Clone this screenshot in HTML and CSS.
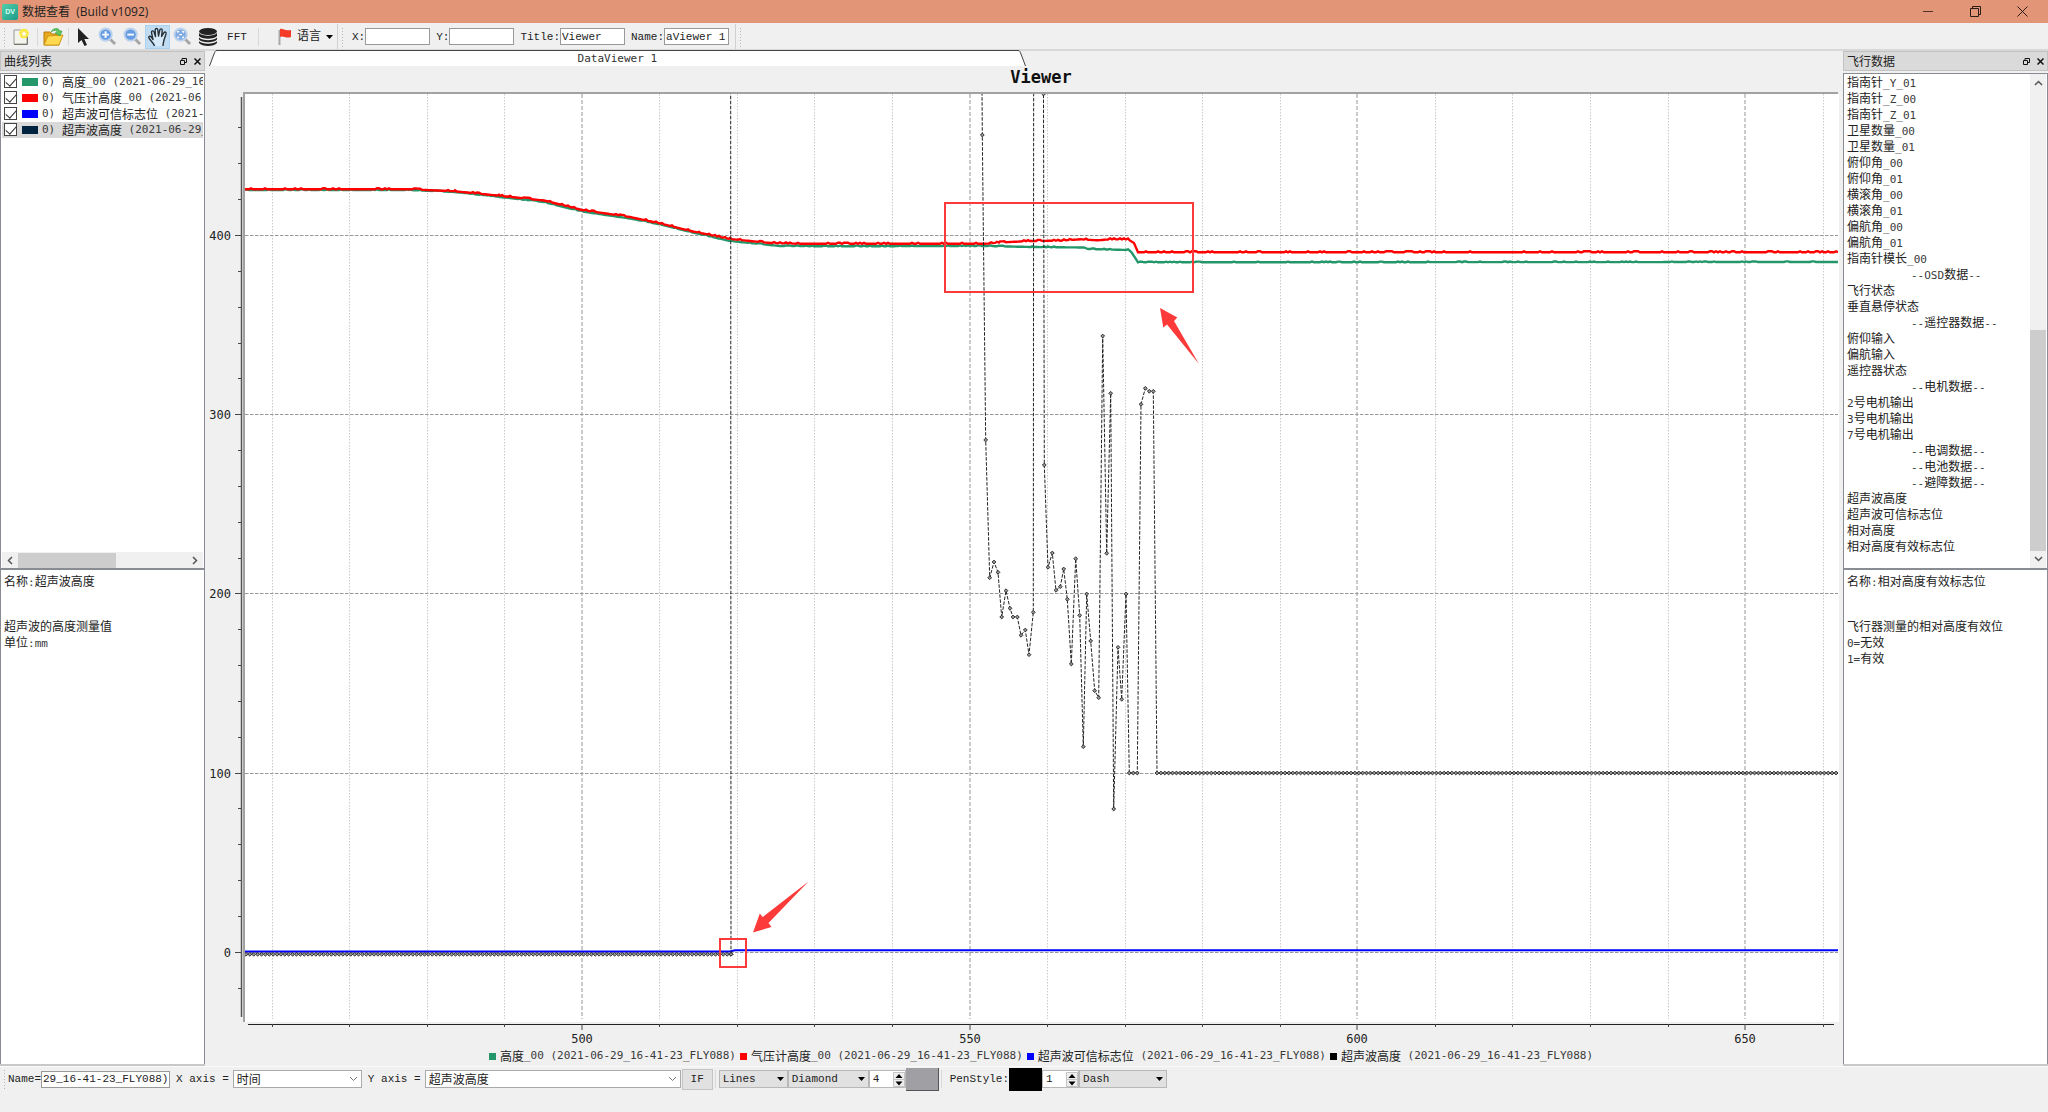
FILE: index.html
```html
<!DOCTYPE html>
<html lang="zh-CN">
<head>
<meta charset="utf-8">
<title>数据查看 (Build v1092)</title>
<link rel="stylesheet" href="styles.css">
</head>
<body>
<header class="titlebar">
  <svg class="app-icon" width="16" height="16" viewBox="0 0 16 16" aria-hidden="true">
    <defs><linearGradient id="app" x1="0" y1="0" x2="1" y2="1"><stop offset="0" stop-color="#4fd0a8"/><stop offset="1" stop-color="#1f9a8c"/></linearGradient></defs>
    <rect width="16" height="16" rx="2" fill="url(#app)"/>
    <text x="8" y="10" class="app-letters">DV</text>
  </svg>
  <h1>数据查看&nbsp; (Build v1092)</h1>
  <div class="window-buttons">
    <button aria-label="最小化"><svg width="11" height="11"><path d="M0 5.500H10" stroke="#4a3228" fill="none"/></svg></button>
    <button aria-label="还原"><svg width="11" height="11"><path d="M.5 2.500H8.500V10.500H.5ZM2.500 2.500V.5H10.500V8.500H8.500" stroke="#2a1c16" fill="none"/></svg></button>
    <button aria-label="关闭"><svg width="11" height="11"><path d="M.5 .5L10.500 10.500M10.500 .5L.5 10.500" stroke="#2a1c16" fill="none"/></svg></button>
  </div>
</header>

<nav class="toolbar top">
  <i class="grip"></i>
  <button class="tool" aria-label="新建"><svg width="18" height="18" viewBox="0 0 18 18"><path d="M2 2H15V16H2Z" fill="#f4f4ee" stroke="#9b9b92"/><path d="M2 16.500H15.500V7" fill="none" stroke="#77776e"/><circle cx="12" cy="5.500" r="4.800" fill="#fff04a"/><path d="M12 1.500L13.200 4.200L16 4.500L14 6.500L14.600 9.300L12 8L9.400 9.300L10 6.500L8 4.500L10.800 4.200Z" fill="#fffde0" stroke="#e8cf00" stroke-width=".6"/></svg></button>
  <i class="sep"></i>
  <button class="tool" aria-label="打开"><svg width="21" height="20" viewBox="0 0 21 20"><path d="M1 18V5H7L9 7H16V18Z" fill="#e9a91c" stroke="#b87d10"/><path d="M1 18L5 9L20 8L16 18Z" fill="#ffd94f" stroke="#d19a1c"/><path d="M8 5C10 1 15 0 17 4L19 4L17 9L12 6L14.500 5C13 3 11 3 8 5Z" fill="#5cc860" stroke="#35993d" stroke-width=".6"/></svg></button>
  <i class="sep narrow"></i>
  <button class="tool" aria-label="选择"><svg width="14" height="20" viewBox="0 0 14 20"><path d="M2 1V16L5.500 13L8.500 19L11 18L8.300 12H13Z" fill="#222"/></svg></button>
  <button class="tool glass" aria-label="放大"><svg width="19" height="19" viewBox="0 0 20 20"><path d="M12 12L18 18" stroke="#999" stroke-width="3"/><circle cx="8" cy="8" r="6.500" fill="#4f8fe0" stroke="#b5cdec" stroke-width="2"/><path d="M8 4.500V11.500M4.500 8H11.500" stroke="#fff" stroke-width="2"/></svg></button>
  <button class="tool glass" aria-label="缩小"><svg width="19" height="19" viewBox="0 0 20 20"><path d="M12 12L18 18" stroke="#999" stroke-width="3"/><circle cx="8" cy="8" r="6.500" fill="#4f8fe0" stroke="#b5cdec" stroke-width="2"/><path d="M4.500 8H11.500" stroke="#fff" stroke-width="2"/></svg></button>
  <button class="tool active" aria-label="平移"><svg width="22" height="22" viewBox="0 0 22 22"><path d="M7.500 20C7 17 2.500 14 1.800 11.500C1.600 9.800 3.800 9.800 5 12L6 13.500L4.500 6.500C4.300 4.600 6.300 4.300 7 6L8.500 10.500L8.200 4C8.300 2 10.500 2 10.800 4L11.500 10L12.800 4C13.300 2.200 15.400 2.600 15.200 4.600L14.600 10.500L16.800 6.800C17.800 5.200 19.600 6 19 8L17 14C16.500 16.500 16 17.500 16 20" fill="#d6e9f8" stroke="#26323a" stroke-width="1.400" stroke-linejoin="round"/></svg></button>
  <button class="tool glass" aria-label="全图"><svg width="19" height="19" viewBox="0 0 20 20"><path d="M12 12L18 18" stroke="#999" stroke-width="3"/><circle cx="8" cy="8" r="6.500" fill="#6fa0e0" stroke="#b5cdec" stroke-width="2"/><path d="M5 6V4.800H6.500M9.500 4.800H11V6M11 10V11.200H9.500M6.500 11.200H5V10M6.500 8H9.500" stroke="#fff" fill="none" stroke-width="1.300"/></svg></button>
  <button class="tool" aria-label="数据库"><svg width="20" height="20" viewBox="0 0 20 20" fill="#222"><ellipse cx="10" cy="4.500" rx="9" ry="3.500"/><path d="M1 6C4 9.500 16 9.500 19 6V9C16 12.500 4 12.500 1 9Z"/><path d="M1 10.500C4 14 16 14 19 10.500V12.500C16 16 4 16 1 12.500Z"/><path d="M1 14.200C4 17.500 16 17.500 19 14.200V16C16 20 4 20 1 16Z"/></svg></button>
  <button class="tool fft">FFT</button>
  <i class="sep"></i>
  <button class="lang"><svg width="14" height="17" viewBox="0 0 14 17"><path d="M1.500 2V17" stroke="#a8a8a8" stroke-width="2"/><path d="M2 1C5 0 6 3 13 2V9C8 11 5 7 2 9Z" fill="#f53a28"/></svg><span>语言</span><svg width="7" height="4"><path d="M0 0H7L3.500 4Z"/></svg></button>
  <i class="rule"></i><i class="grip"></i>
  <label class="field first">X:<input type="text"></label>
  <label class="field">Y:<input type="text"></label>
  <label class="field">Title:<input type="text" value="Viewer"></label>
  <label class="field">Name:<input type="text" value="aViewer 1"></label>
  <i class="rule"></i><i class="grip"></i>
</nav>

<main>
  <aside class="dock">
    <div class="dock-head"><h2>曲线列表</h2>
      <button aria-label="浮动"><svg width="7" height="7"><path d="M2 2V.5H6.500V4.500H5M.5 2.500H4.500V6.500H.5Z" fill="none" stroke="#111"/></svg></button>
      <button aria-label="关闭"><svg width="7" height="7"><path d="M.5 .5L6.500 6.500M6.500 .5L.5 6.500" stroke="#111" stroke-width="1.500"/></svg></button>
    </div>
    <section class="list curves">
      <ul>
        <li><label><input type="checkbox" checked><i class="swatch green"></i><span class="m">0) </span>高度<span class="m">_00 (2021-06-29_16-41-23_FLY088)</span></label></li>
        <li><label><input type="checkbox" checked><i class="swatch red"></i><span class="m">0) </span>气压计高度<span class="m">_00 (2021-06-29_16-41-23_FLY088)</span></label></li>
        <li><label><input type="checkbox" checked><i class="swatch blue"></i><span class="m">0) </span>超声波可信标志位<span class="m"> (2021-06-29_16-41-23_FLY088)</span></label></li>
        <li class="selected"><label><input type="checkbox" checked><i class="swatch navy"></i><span class="m">0) </span>超声波高度<span class="m"> (2021-06-29_16-41-23_FLY088)</span></label></li>
      </ul>
      <div class="hscroll"><svg width="6" height="9"><path d="M5 1L1.500 4.500L5 8" class="chev"/></svg><div class="track"><i class="thumb"></i></div><svg width="6" height="9"><path d="M1 1L4.500 4.500L1 8" class="chev"/></svg></div>
    </section>
    <section class="info"><p class="name">名称<span class="m">:</span>超声波高度</p><p>超声波的高度测量值<br>单位<span class="m">:mm</span></p></section>
  </aside>

  <section class="viewer">
    <div class="tabs">
      <svg width="8" height="16"><path d="M8 1L6 2L1 16H8Z" fill="#fff"/><path d="M8 .5C6 .5 6 2 5 4L.5 16" class="tab-edge"/></svg>
      <button class="tab">DataViewer 1</button>
      <svg width="8" height="16"><path d="M0 1L2 2L7 16H0Z" fill="#fff"/><path d="M0 .5C2 .5 2 2 3 4L7.500 16" class="tab-edge"/></svg>
    </div>
    <h2 class="chart-title">Viewer</h2>
    <svg class="chart" viewBox="205 90 1638 955" role="img" aria-label="Viewer">
      <defs>
        <clipPath id="plot"><rect x="245" y="94" width="1593" height="928"/></clipPath>
        <marker id="diamond" markerWidth="5" markerHeight="5" refX="2.500" refY="2.500" markerUnits="userSpaceOnUse"><path d="M2.500 .6L4.400 2.500L2.500 4.400L.6 2.500Z" fill="#999" stroke="#222" stroke-width=".9"/></marker>
      </defs>
      <rect x="245" y="94" width="1594" height="928" fill="#fff"/>
      <path d="M244 1022V93H1838" fill="none" stroke="#a2a2a2" stroke-width="2"/>
      <g id="grid"></g>
      <g id="axes"><path d="M241.500 97V1017" stroke="#555" stroke-width="1.500"/><path d="M248 1024.500H1834" stroke="#222"/></g>
      <g clip-path="url(#plot)" id="series"></g>
      <g class="marks">
        <rect x="945" y="203" width="248" height="89"/><rect x="720" y="939" width="26" height="28"/>
        <path d="M1160 308L1177.300 317.500L1174 321L1199 364L1167 324.500L1163.300 327.500Z"/>
        <path d="M753 932.500L759.800 913.500L762.700 917L808.500 881.500L768.500 923L771.500 927Z"/>
      </g>
    </svg>
    <ul class="legend">
      <li><i class="green"></i>高度<span class="m">_00 (2021-06-29_16-41-23_FLY088)</span></li>
      <li><i class="red"></i>气压计高度<span class="m">_00 (2021-06-29_16-41-23_FLY088)</span></li>
      <li><i class="blue"></i>超声波可信标志位<span class="m"> (2021-06-29_16-41-23_FLY088)</span></li>
      <li><i class="black"></i>超声波高度<span class="m"> (2021-06-29_16-41-23_FLY088)</span></li>
    </ul>
  </section>

  <aside class="dock">
    <div class="dock-head"><h2>飞行数据</h2>
      <button aria-label="浮动"><svg width="7" height="7"><path d="M2 2V.5H6.500V4.500H5M.5 2.500H4.500V6.500H.5Z" fill="none" stroke="#111"/></svg></button>
      <button aria-label="关闭"><svg width="7" height="7"><path d="M.5 .5L6.500 6.500M6.500 .5L.5 6.500" stroke="#111" stroke-width="1.500"/></svg></button>
    </div>
    <section class="list flight">
      <ul>
        <li>指南针<span class="m">_Y_01</span></li>
        <li>指南针<span class="m">_Z_00</span></li>
        <li>指南针<span class="m">_Z_01</span></li>
        <li>卫星数量<span class="m">_00</span></li>
        <li>卫星数量<span class="m">_01</span></li>
        <li>俯仰角<span class="m">_00</span></li>
        <li>俯仰角<span class="m">_01</span></li>
        <li>横滚角<span class="m">_00</span></li>
        <li>横滚角<span class="m">_01</span></li>
        <li>偏航角<span class="m">_00</span></li>
        <li>偏航角<span class="m">_01</span></li>
        <li>指南针模长<span class="m">_00</span></li>
        <li class="group"><span class="m">--OSD</span>数据<span class="m">--</span></li>
        <li>飞行状态</li>
        <li>垂直悬停状态</li>
        <li class="group"><span class="m">--</span>遥控器数据<span class="m">--</span></li>
        <li>俯仰输入</li>
        <li>偏航输入</li>
        <li>遥控器状态</li>
        <li class="group"><span class="m">--</span>电机数据<span class="m">--</span></li>
        <li><span class="m">2</span>号电机输出</li>
        <li><span class="m">3</span>号电机输出</li>
        <li><span class="m">7</span>号电机输出</li>
        <li class="group"><span class="m">--</span>电调数据<span class="m">--</span></li>
        <li class="group"><span class="m">--</span>电池数据<span class="m">--</span></li>
        <li class="group"><span class="m">--</span>避障数据<span class="m">--</span></li>
        <li>超声波高度</li>
        <li>超声波可信标志位</li>
        <li>相对高度</li>
        <li>相对高度有效标志位</li>
      </ul>
      <div class="vscroll"><svg width="9" height="6"><path d="M1 5L4.500 1.500L8 5" class="chev"/></svg><div class="track"><i class="thumb"></i></div><svg width="9" height="6"><path d="M1 1L4.500 4.500L8 1" class="chev"/></svg></div>
    </section>
    <section class="info"><p class="name">名称<span class="m">:</span>相对高度有效标志位</p><p>飞行器测量的相对高度有效位<br><span class="m">0=</span>无效<br><span class="m">1=</span>有效</p></section>
  </aside>
</main>

<footer class="toolbar bottom">
  <i class="grip"></i>
  <label class="field">Name=<input class="wide" type="text" value="29_16-41-23_FLY088)"></label>
  <label class="field">X axis =<span class="combo light x-axis"><select><option>时间</option></select><svg width="9" height="6"><path d="M1 1L4.500 4.500L8 1" class="chev thin"/></svg></span></label>
  <label class="field">Y axis =<span class="combo light y-axis"><select><option>超声波高度</option></select><svg width="9" height="6"><path d="M1 1L4.500 4.500L8 1" class="chev thin"/></svg></span></label>
  <button class="if">IF</button>
  <i class="sep"></i>
  <span class="combo style"><select aria-label="曲线样式"><option>Lines</option></select><svg width="7" height="4"><path d="M0 0H7L3.500 4Z"/></svg></span>
  <span class="combo symbol"><select aria-label="点样式"><option>Diamond</option></select><svg width="7" height="4"><path d="M0 0H7L3.500 4Z"/></svg></span>
  <span class="spin"><input type="number" value="4" aria-label="点大小"><svg width="12" height="15"><path d="M.5 .5H11.500V14.500H.5ZM.5 7.500H11.500" fill="#eee" stroke="#c4c4c4"/><path d="M2.500 6L6 2L9.500 6ZM2.500 9.500L6 13.500L9.500 9.500Z"/></svg></span>
  <button class="color grey" aria-label="点颜色"></button>
  <i class="sep"></i>
  <span class="pen">PenStyle:</span>
  <button class="color black" aria-label="线颜色"></button>
  <span class="spin"><input type="number" value="1" aria-label="线宽"><svg width="12" height="15"><path d="M.5 .5H11.500V14.500H.5ZM.5 7.500H11.500" fill="#eee" stroke="#c4c4c4"/><path d="M2.500 6L6 2L9.500 6ZM2.500 9.500L6 13.500L9.500 9.500Z"/></svg></span>
  <span class="combo dash"><select aria-label="线型"><option>Dash</option></select><svg width="7" height="4"><path d="M0 0H7L3.500 4Z"/></svg></span>
</footer>
<script src="chart.js"></script>
</body>
</html>
```
FILE: styles.css
```css
* { box-sizing: border-box; }
body {
  margin: 0;
  min-height: 100vh;
  display: flex;
  flex-direction: column;
  padding-bottom: 20px;
  background: #f0f0f0;
  color: #222;
  font: 12px/16px "Noto Sans CJK SC", sans-serif;
}
h1, h2, p, ul { margin: 0; padding: 0; font-weight: normal; font-size: inherit; }
ul { list-style: none; }
button, input, select { font: inherit; color: inherit; margin: 0; padding: 0; border: 0; border-radius: 0; background: none; }
svg { flex: none; display: block; }
.m { font-family: "DejaVu Sans Mono", monospace; font-size: 11px; line-height: 12px; white-space: pre; color: #3a3a3a; }
.green { background: #23966a; }
.red { background: #f00; }
.blue { background: #00f; }
.navy { background: #00233f; }
.black { background: #000; }
.grey { background: #a0a0a4; }

.titlebar { display: flex; align-items: center; height: 23px; padding: 0 2px; background: #e29677; }
.app-letters { font: bold 7px "Liberation Sans", sans-serif; fill: #d8fff0; text-anchor: middle; }
.titlebar h1 { margin-left: 4px; font-family: "Open Sans", "Noto Sans CJK SC", sans-serif; }
.window-buttons { display: flex; margin-left: auto; }
.window-buttons button { width: 47px; height: 23px; display: grid; place-items: center; }

.toolbar { display: flex; align-items: center; font: 11px/16px "Liberation Mono", "Noto Sans CJK SC", monospace; }
.toolbar.top { height: 28px; padding-top: 1px; border-bottom: 2px solid #d8d8d8; }
.toolbar.bottom { height: 26px; padding-bottom: 1px; border-top: 1px solid #fafafa; }
.grip { width: 8px; height: 20px; flex: none; background: radial-gradient(circle, #b5b5b5 1px, transparent 1px) 3px 0 / 3px 3px repeat-y; }
.sep { width: 8px; height: 18px; flex: none; background: linear-gradient(#d8d8d8, #d8d8d8) center / 1px 100% no-repeat; }
.sep.narrow { width: 4px; }
.rule { width: 1px; height: 25px; background: #d0d0d0; }
.tool { width: 25px; height: 24px; display: grid; place-items: center; }
.tool.active { background: #c0dcf3; border: 1px solid #a9d2f2; }
.tool.glass svg { opacity: .85; }
.tool.fft { width: 34px; }
.lang { display: flex; align-items: center; gap: 5px; width: 75px; padding-left: 16px; font-size: 12px; }
.field { display: flex; align-items: center; margin-right: 6px; white-space: pre; }
.field.first { margin-left: 6px; }
.field input { width: 65px; height: 17px; padding: 0 1px; background: #fff; border: 1px solid #999; }
.field input.wide { width: 129px; }
.combo, .spin { display: grid; align-items: center; height: 18px; }
.combo select, .spin input { grid-area: 1 / 1; width: 100%; height: 18px; appearance: none; padding-left: 3px; background: #e1e1e1; border: 1px solid #b8b8b8; }
.combo svg, .spin svg { grid-area: 1 / 1; justify-self: end; margin-right: 4px; pointer-events: none; }
.combo.light select { background: #fff; border-color: #aaa; font-size: 12px; font-family: "Noto Sans CJK SC", sans-serif; line-height: 14px; }
.combo.light { margin-left: 4px; }
.x-axis { width: 129px; }
.y-axis { width: 256px; }
.field:has(.y-axis) { margin-right: 1px; }
.if { width: 31px; height: 21px; background: #e1e1e1; border: 1px solid #c4c4c4; }
.bottom .sep { width: 6px; }
.style { width: 69px; }
.symbol { width: 81px; }
.dash { width: 88px; }
.spin { width: 37px; }
.spin input { background: #fff; appearance: textfield; }
.spin svg { margin-right: 1px; }
.color { width: 33px; height: 23px; }
.color.grey { border-right: 1px solid #555; border-bottom: 1px solid #555; }
.pen { padding-left: 5px; }

main { flex: 1; display: flex; min-height: 0; }
.dock { width: 205px; flex: none; display: flex; flex-direction: column; border-bottom: 2px solid #c8c8c8; }
.dock-head { display: flex; align-items: center; gap: 7px; height: 20px; margin-bottom: 2px; padding: 0 3px; background: #dadada; border: 1px solid #c2c2c2; }
.dock-head h2 { flex: 1; }
.dock-head button { height: 16px; display: grid; place-items: center; }
.list { display: flex; height: 497px; background: #fff; border: 1px solid #8a8c94; border-bottom-width: 2px; }
.list ul { flex: 1; min-width: 0; overflow: hidden; }
.list li { height: 16px; line-height: 15px; white-space: nowrap; overflow: hidden; }
.curves { flex-direction: column; padding: 0 1px; }
.curves label { display: flex; align-items: center; padding-left: 2px; }
.curves input { appearance: none; flex: none; width: 13px; height: 13px; background: #fff; border: 1px solid #444; display: grid; place-items: center; }
.curves input:checked::after { content: ""; width: 9px; height: 5px; border: solid #333; border-width: 0 0 1px 1px; rotate: -48deg; translate: 0 -1px; }
.swatch { flex: none; width: 16px; height: 8px; margin: 0 4px 0 5px; }
.selected { background: #d9d9d9; }
.hscroll { display: flex; align-items: center; height: 16px; padding: 0 5px; gap: 5px; background: #f0f0f0; }
.track { flex: 1; display: flex; }
.thumb { background: #cdcdcd; }
.hscroll .thumb { width: 58%; height: 15px; }
.hscroll .track { height: 15px; }
.chev { fill: none; stroke: #555; stroke-width: 1.500px; }
.chev.thin { stroke: #777; stroke-width: 1px; }
.flight { padding-right: 1px; }
.flight li { padding-left: 3px; }
.flight li.group { padding-left: 67px; }
.vscroll { display: flex; flex-direction: column; align-items: center; gap: 5px; width: 16px; padding: 6px 0; background: #f0f0f0; }
.vscroll .track { width: 16px; flex-direction: column; justify-content: flex-end; }
.vscroll .thumb { height: 48%; }
.info { flex: 1; padding: 3px; background: #fff; border: solid #8a8c94; border-width: 0 1px; }
.info .name { margin-bottom: 29px; }

.viewer { flex: 1; min-width: 0; display: flex; flex-direction: column; }
.tabs { display: flex; height: 16px; margin: -1px 0 0 4px; }
.tab { width: 49%; height: 16px; background: #fff; border-top: 1px solid #444; font: 11px/14px "DejaVu Sans Mono", monospace; color: #333; }
.tab-edge { fill: none; stroke: #444; }
.chart-title { height: 24px; padding-left: 34px; text-align: center; font: bold 17px/22px "DejaVu Sans Mono", monospace; color: #111; }
.chart { flex: 1; width: 100%; min-height: 0; }
.tick-label { font: 12px "DejaVu Sans Mono", monospace; fill: #222; }
.marks rect { fill: none; stroke: #fc3a3a; stroke-width: 2px; }
.marks path { fill: #fc3a3a; }
.legend { display: flex; justify-content: center; gap: 4px; height: 21px; padding: 3px 0 0 34px; }
.legend li { display: flex; align-items: center; height: 16px; white-space: nowrap; }
.legend i { width: 7px; height: 7px; margin-right: 4px; }
```
FILE: chart.js
```js
const NS = "http://www.w3.org/2000/svg";
const X = t => 581.8 + (t - 500) * 7.755;
const Y = v => 952.3 - v * 1.792;

function add(parent, tag, attrs, text) {
  const el = document.createElementNS(NS, tag);
  for (const k in attrs) el.setAttribute(k, attrs[k]);
  if (text !== undefined) el.textContent = text;
  document.getElementById(parent).append(el);
}

// Grid lines, ticks and tick labels
for (let t = 460; t <= 660; t += 10) {
  const major = t % 50 === 0, x = Math.round(X(t)) + (major ? 0 : 0.5);
  add("grid", "path", { d: `M${x} 94V1019`, stroke: major ? "#cacaca" : "#cacaca", "stroke-width": major ? 2 : 1, "stroke-dasharray": major ? "4 2" : "1.5 1.500" });
  add("axes", "path", { d: `M${x} 1024V${major ? 1030 : 1027}`, stroke: "#444" });
  if (major) add("axes", "text", { x, y: 1043, "text-anchor": "middle", class: "tick-label" }, t);
}
for (let v = -20; v <= 460; v += 20) {
  const major = v % 100 === 0, y = Math.floor(Y(v)) + 0.5;
  if (major) {
    add("grid", "path", { d: `M245 ${y}H1838`, stroke: "#999", "stroke-dasharray": "3.500 1.500" });
    add("axes", "text", { x: 231, y: y + 4, "text-anchor": "end", class: "tick-label" }, v);
  }
  add("axes", "path", { d: `M${major ? 235 : 238} ${y}H241`, stroke: "#444" });
}

// Resamples a curve every two units and adds sensor jitter
let seed = 7;
const random = () => (seed = (seed * 16807) % 2147483647) / 2147483647;
function jitter(points, amount) {
  const out = [];
  for (let i = 0; i < points.length - 1; i++) {
    const [x0, y0] = points[i], [x1, y1] = points[i + 1];
    for (let x = x0; x < x1; x += 2) {
      const bump = random() > 0.8 ? -amount : 0;
      out.push([x, y0 + (y1 - y0) * (x - x0) / (x1 - x0) + bump]);
    }
  }
  out.push(points[points.length - 1]);
  return out;
}
const line = (points, attrs) => add("series", "polyline", { points: points.map(p => p.join()).join(" "), fill: "none", ...attrs });

const sonic = [];
for (let x = 246; x < 731; x += 3.88) sonic.push([x, 954.3]);
sonic.push([731, 954.3], [730.5, -400], [979, -400], [982.3, 135], [985.7, 440], [989.7, 577.7], [994, 562], [998, 572.3], [1001.7, 617],
  [1006, 590.7], [1010, 608.3], [1013, 617], [1017.3, 617], [1021, 635.3], [1025.3, 630], [1029, 654.7], [1033.3, 612.3], [1034, -400],
  [1043, -400], [1043.5, 94], [1044.3, 465], [1048, 567.3], [1052.3, 553], [1056, 590.3], [1060.3, 586.7], [1063.7, 569], [1067.3, 599.3],
  [1071.3, 664], [1075.7, 558.7], [1079.7, 615.3], [1083.3, 746.7], [1086.7, 594], [1090.7, 641], [1094.7, 690.7], [1098.7, 697.7],
  [1102.7, 336], [1106.7, 553.3], [1110.7, 393.3], [1113.7, 809], [1118, 647.3], [1121.7, 699.3], [1126, 594], [1129.3, 773], [1133.3, 773],
  [1137.3, 773], [1141, 404.3], [1145.3, 388.3], [1149.3, 391.3], [1153.3, 391.3]);
for (let x = 1157; x < 1840; x += 3.88) sonic.push([x, 773]);

line(jitter([[245, 190], [410, 190], [455, 192], [500, 197], [544, 202], [582, 211.500], [630, 218.500], [658, 224], [693, 232.500], [730, 241],
  [780, 246], [830, 246.3], [985, 246], [1032, 247], [1084, 247.500], [1088, 249], [1128, 250], [1132, 253], [1138, 262.3], [1838, 262]], 0.6), { stroke: "#23966a", "stroke-width": 2.4 });
line(jitter([[245, 189.3], [410, 189.3], [455, 191.3], [500, 195.800], [544, 200.500], [582, 210], [630, 217], [658, 223], [693, 231.500], [730, 239],
  [770, 243], [800, 243.800], [985, 243.800], [1000, 242.500], [1030, 241], [1060, 240.700], [1080, 239.300], [1098, 240.300], [1110, 239.300], [1128, 239.500],
  [1134, 243], [1138, 252.3], [1838, 252.3]], 1), { stroke: "#f00", "stroke-width": 2.4 });
line([[245, 951.500], [730, 951.500], [735, 950.300], [1838, 950.300]], { stroke: "#00f", "stroke-width": 2 });
line(sonic, { stroke: "#222", "stroke-width": 1, "stroke-dasharray": "3.500 1.500", "marker-start": "url(#diamond)", "marker-mid": "url(#diamond)", "marker-end": "url(#diamond)" });
```
